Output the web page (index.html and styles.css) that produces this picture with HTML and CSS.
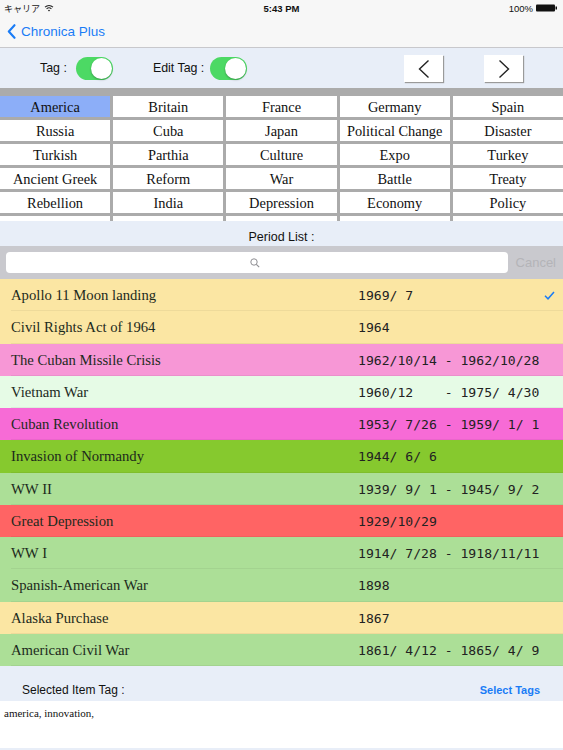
FILE: index.html
```html
<!DOCTYPE html>
<html>
<head>
<meta charset="utf-8">
<link rel="stylesheet" href="styles.css">
</head>
<body>
<div class="status">
  <div class="st-left"><span class="carrier">キャリア</span>
    <svg class="wifi" width="10" height="8" viewBox="0 0 10 8"><path d="M1 3.2 A6 6 0 0 1 9 3.2" fill="none" stroke="#222" stroke-width="1.1"/><path d="M2.6 4.8 A3.7 3.7 0 0 1 7.4 4.8" fill="none" stroke="#222" stroke-width="1.1"/><path d="M5 7.6 L3.9 6.3 A1.6 1.6 0 0 1 6.1 6.3 Z" fill="#222"/></svg>
  </div>
  <div class="st-center">5:43 PM</div>
  <div class="st-right"><span>100%</span>
    <svg class="battery" width="22" height="8" viewBox="0 0 22 8"><rect x="0" y="0.5" width="19" height="7" rx="1" fill="#111"/><rect x="19.5" y="2.5" width="1.5" height="3" fill="#111"/></svg>
  </div>
</div>
<div class="nav">
  <svg class="back" width="9" height="15" viewBox="0 0 9 15"><path d="M7.5 1.2 L1.8 7.5 L7.5 13.8" fill="none" stroke="#1a7cf6" stroke-width="2.1" stroke-linecap="round" stroke-linejoin="round"/></svg>
  <span class="back-text">Chronica Plus</span>
</div>
<div class="toolbar">
  <span class="tlabel">Tag :</span>
  <span class="switch sw1"><span class="knob"></span></span>
  <span class="tlabel tl2">Edit Tag :</span>
  <span class="switch sw2"><span class="knob"></span></span>
  <span class="pager prev"><svg width="14" height="20" viewBox="0 0 14 20"><path d="M11.5 1.5 L2.5 10 L11.5 18.5" fill="none" stroke="#222" stroke-width="1.4"/></svg></span>
  <span class="pager next"><svg width="14" height="20" viewBox="0 0 14 20"><path d="M2.5 1.5 L11.5 10 L2.5 18.5" fill="none" stroke="#222" stroke-width="1.4"/></svg></span>
</div>
<div class="grid-wrap">
  <div class="grid">
    <div class="cell sel">America</div><div class="cell">Britain</div><div class="cell">France</div><div class="cell">Germany</div><div class="cell">Spain</div>
    <div class="cell">Russia</div><div class="cell">Cuba</div><div class="cell">Japan</div><div class="cell">Political Change</div><div class="cell">Disaster</div>
    <div class="cell">Turkish</div><div class="cell">Parthia</div><div class="cell">Culture</div><div class="cell">Expo</div><div class="cell">Turkey</div>
    <div class="cell">Ancient Greek</div><div class="cell">Reform</div><div class="cell">War</div><div class="cell">Battle</div><div class="cell">Treaty</div>
    <div class="cell">Rebellion</div><div class="cell">India</div><div class="cell">Depression</div><div class="cell">Economy</div><div class="cell">Policy</div>
    <div class="cell"></div><div class="cell"></div><div class="cell"></div><div class="cell"></div><div class="cell"></div>
  </div>
</div>
<div class="period-header">Period List :</div>
<div class="search">
  <div class="field">
    <svg width="10" height="10" viewBox="0 0 10 10"><circle cx="4" cy="4" r="3.2" fill="none" stroke="#8e8e93" stroke-width="1"/><path d="M6.3 6.3 L9.2 9.2" stroke="#8e8e93" stroke-width="1.1"/></svg>
  </div>
  <span class="cancel">Cancel</span>
</div>
<div class="list">
  <div class="row yellow"><div class="inner"><span class="name">Apollo 11 Moon landing</span><span class="date">1969/ 7</span>
    <svg class="check" width="11" height="9" viewBox="0 0 11 9"><path d="M1 4.8 L4 7.8 L10 1" fill="none" stroke="#1a7cf6" stroke-width="1.5"/></svg></div></div>
  <div class="row yellow"><div class="inner"><span class="name">Civil Rights Act of 1964</span><span class="date">1964</span></div></div>
  <div class="row pink"><div class="inner"><span class="name">The Cuban Missile Crisis</span><span class="date">1962/10/14 - 1962/10/28</span></div></div>
  <div class="row mint"><div class="inner"><span class="name">Vietnam War</span><span class="date">1960/12    - 1975/ 4/30</span></div></div>
  <div class="row magenta"><div class="inner"><span class="name">Cuban Revolution</span><span class="date">1953/ 7/26 - 1959/ 1/ 1</span></div></div>
  <div class="row green"><div class="inner"><span class="name">Invasion of Normandy</span><span class="date">1944/ 6/ 6</span></div></div>
  <div class="row lgreen"><div class="inner"><span class="name">WW II</span><span class="date">1939/ 9/ 1 - 1945/ 9/ 2</span></div></div>
  <div class="row red"><div class="inner"><span class="name">Great Depression</span><span class="date">1929/10/29</span></div></div>
  <div class="row lgreen"><div class="inner"><span class="name">WW I</span><span class="date">1914/ 7/28 - 1918/11/11</span></div></div>
  <div class="row lgreen"><div class="inner"><span class="name">Spanish-American War</span><span class="date">1898</span></div></div>
  <div class="row yellow"><div class="inner"><span class="name">Alaska Purchase</span><span class="date">1867</span></div></div>
  <div class="row lgreen"><div class="inner"><span class="name">American Civil War</span><span class="date">1861/ 4/12 - 1865/ 4/ 9</span></div></div>
</div>
<div class="selected-bar">
  <span class="sel-label">Selected Item Tag :</span>
  <span class="sel-link">Select Tags</span>
</div>
<div class="tags-text">america, innovation,</div>
</body>
</html>
```

FILE: styles.css
```css
* { box-sizing: border-box; }
html, body { margin: 0; padding: 0; }
body {
  width: 563px;
  height: 750px;
  overflow: hidden;
  background: #e8eef8;
  font-family: "Liberation Sans", Arial, sans-serif;
  color: #111;
}
.status {
  height: 16px;
  background: #f7f7f7;
  display: flex;
  align-items: center;
  justify-content: space-between;
  padding: 0 5px 0 4px;
  font-size: 9.5px;
  position: relative;
}
.st-left { display: flex; align-items: center; gap: 4px; }
.carrier { font-family: "Noto Sans CJK JP", sans-serif; font-size: 9px; color: #222; }
.st-center {
  position: absolute;
  left: 0; right: 0;
  text-align: center;
  font-weight: bold;
  font-size: 9.5px;
}
.st-right { display: flex; align-items: center; gap: 3px; }
.nav {
  height: 32px;
  background: #f7f7f7;
  border-bottom: 1px solid #c8c8cc;
  display: flex;
  align-items: center;
  padding-left: 7px;
  padding-bottom: 1px;
}
.back { margin-right: 5px; }
.back-text { color: #1a7cf6; font-size: 13.5px; }
.toolbar {
  height: 40px;
  background: #e8eef8;
  display: flex;
  align-items: center;
  padding: 0 40px 0 40px;
}
.tlabel { font-size: 12.4px; color: #111; }
.tl2 { margin-left: 40px; }
.switch {
  width: 37px;
  height: 23px;
  border-radius: 12px;
  background: #4cd964;
  display: flex;
  align-items: center;
  justify-content: flex-end;
  padding-right: 1px;
}
.sw1 { margin-left: 9px; }
.sw2 { margin-left: 6px; }
.knob {
  width: 21px;
  height: 21px;
  border-radius: 50%;
  background: #fff;
  box-shadow: 0 1px 2px rgba(0,0,0,0.3);
}
.pager {
  width: 39px;
  height: 27px;
  background: #fff;
  box-shadow: 1px 1px 1px #9a9a9a;
  display: flex;
  align-items: center;
  justify-content: center;
}
.prev { margin-left: auto; margin-top: 1px; }
.next { margin-left: 41px; margin-top: 1px; }
.grid-wrap {
  height: 133px;
  overflow: hidden;
  background: #ababab;
  padding-top: 8px;
}
.grid {
  display: grid;
  grid-template-columns: repeat(5, 1fr);
  grid-auto-rows: 21px;
  column-gap: 3px;
  row-gap: 3px;
}
.cell {
  background: #fff;
  font-family: "Liberation Serif", "Times New Roman", serif;
  font-size: 14.4px;
  color: #111;
  display: flex;
  align-items: center;
  justify-content: center;
  white-space: nowrap;
  padding-top: 2px;
}
.cell.sel { background: #8caef8; }
.period-header {
  height: 25px;
  background: #e8eef8;
  display: flex;
  align-items: center;
  justify-content: center;
  font-size: 12.5px;
  color: #111;
  padding-top: 6px;
}
.search {
  height: 33px;
  background: #c9c9ce;
  display: flex;
  align-items: center;
  padding: 0 7px 0 6px;
}
.field {
  width: 502px;
  height: 21px;
  background: #fff;
  border-radius: 4px;
  display: flex;
  align-items: center;
  justify-content: center;
  padding-right: 4px;
}
.cancel {
  margin-left: auto;
  font-size: 13px;
  color: #b4b4b8;
}
.row {
  height: 32.25px;
  padding-left: 11px;
}
.inner {
  height: 100%;
  display: flex;
  align-items: center;
  border-bottom: 1px solid rgba(0,0,0,0.05);
  padding-top: 2px;
}
.name {
  width: 347px;
  font-family: "Liberation Serif", "Times New Roman", serif;
  font-size: 14.7px;
  color: #1c2a1c;
}
.date {
  font-family: "DejaVu Sans Mono", "Liberation Mono", monospace;
  font-size: 13.1px;
  white-space: pre;
  color: #222;
}
.check { margin-left: auto; margin-right: 8px; }
.yellow { background: #fbe6a3; }
.pink { background: #f797d6; }
.mint { background: #e6fbe6; }
.magenta { background: #f76bd6; }
.green { background: #86c92e; }
.lgreen { background: #acdf97; }
.red { background: #ff6464; }
.selected-bar {
  height: 35px;
  background: #e8eef8;
  display: flex;
  align-items: center;
  justify-content: space-between;
  padding: 12px 23px 0 22px;
  font-size: 12px;
}
.sel-label { color: #111; }
.sel-link { color: #1a7cf6; font-weight: bold; font-size: 11px; }
.tags-text {
  height: 47px;
  background: #fff;
  font-family: "Liberation Serif", "Times New Roman", serif;
  font-size: 11px;
  padding: 6px 4px;
  color: #111;
}
```
